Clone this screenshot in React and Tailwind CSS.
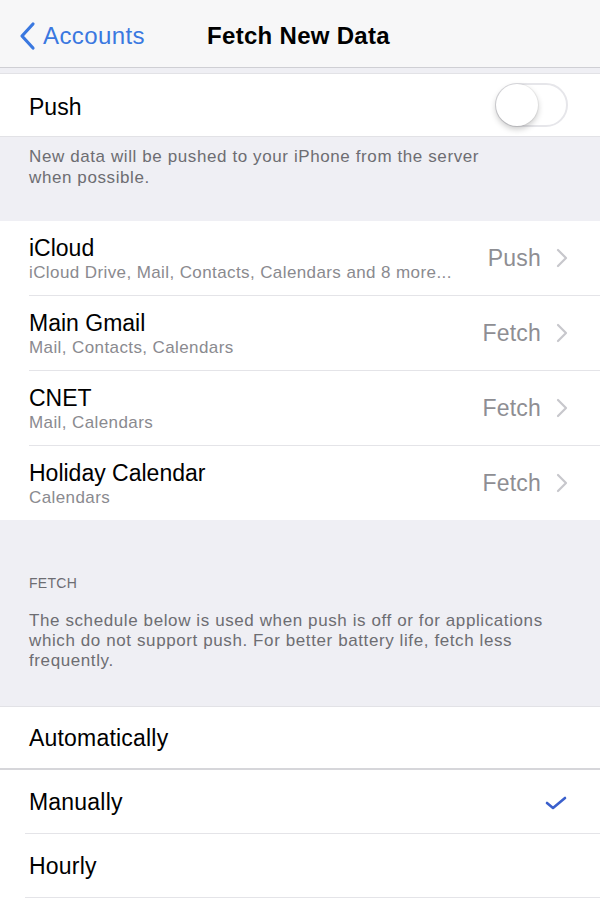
import React from "react";

const accounts = [
  { name: "iCloud", detail: "iCloud Drive, Mail, Contacts, Calendars and 8 more...", mode: "Push" },
  { name: "Main Gmail", detail: "Mail, Contacts, Calendars", mode: "Fetch" },
  { name: "CNET", detail: "Mail, Calendars", mode: "Fetch" },
  { name: "Holiday Calendar", detail: "Calendars", mode: "Fetch" },
];

function Chevron() {
  return (
    <svg width="12" height="20" viewBox="0 0 12 20" fill="none">
      <path d="M2 2l8 8-8 8" stroke="#c7c7cc" strokeWidth="2.2" strokeLinecap="round" strokeLinejoin="round" />
    </svg>
  );
}

function Toggle() {
  return (
    <div className="relative w-[73px] h-[44px] rounded-full border-2 border-[#e6e6ea] bg-white">
      <div className="absolute left-[-1px] top-[-1px] w-[42px] h-[42px] rounded-full bg-white shadow-[0_3px_6px_rgba(0,0,0,0.22),0_0_0_1px_rgba(0,0,0,0.05)]" />
    </div>
  );
}

export default function App() {
  return (
    <div className="w-[600px] h-[900px] overflow-hidden bg-[#efeff4] font-['Liberation_Sans',Arial,sans-serif] text-black">
      {/* navigation bar */}
      <div className="relative h-[68px] bg-[#f7f7f8] border-b border-[#cfcfd4] flex items-center">
        <div className="flex items-center pl-[18px] pt-[5px] gap-[7px] text-[#3a78e0]">
          <svg width="18" height="30" viewBox="0 0 18 30" fill="none">
            <path d="M15 3L4 15l11 12" stroke="#3a78e0" strokeWidth="3.2" strokeLinecap="round" strokeLinejoin="round" />
          </svg>
          <span className="text-[24px] tracking-[0.4px]">Accounts</span>
        </div>
        <div className="absolute inset-x-0 top-0 h-full flex items-center justify-center pt-[5px] pointer-events-none">
          <span className="text-[24px] font-bold tracking-[0.3px] ml-[-3px]">Fetch New Data</span>
        </div>
      </div>

      {/* push switch */}
      <div className="mt-[5px] h-[64px] bg-white border-y border-[#e2e2e6] flex items-center justify-between pl-[29px] pr-[32px]">
        <span className="text-[23px] pt-[5px]">Push</span>
        <Toggle />
      </div>
      <div className="h-[84px] pl-[29px] pr-[20px] pt-[9px] text-[17px] tracking-[0.6px] leading-[21px] text-[#6d6d72]">
        New data will be pushed to your iPhone from the server
        <br />
        when possible.
      </div>

      {/* accounts list */}
      <div className="bg-white">
        {accounts.map((a, i) => (
          <div key={a.name} className="pl-[29px]">
            <div
              className={
                "flex items-center justify-between pr-[32px] " +
                (i < accounts.length - 1 ? "h-[75px] border-b border-[#e4e4e8]" : "h-[74px]")
              }
            >
              <div className="flex flex-col pt-[2px]">
                <span className="text-[23px] leading-[26px]">{a.name}</span>
                <span className="text-[17px] tracking-[0.4px] leading-[22px] text-[#8a8a8f] mt-[1px]">{a.detail}</span>
              </div>
              <div className="flex items-center gap-[15px]">
                <span className="text-[23px] tracking-[0.2px] text-[#8e8e93]">{a.mode}</span>
                <Chevron />
              </div>
            </div>
          </div>
        ))}
      </div>

      {/* fetch schedule */}
      <div className="h-[186px] pl-[29px] pr-[20px] pt-[53px]">
        <div className="text-[14px] tracking-[0.3px] leading-[20px] text-[#6d6d72]">FETCH</div>
        <div className="mt-[18px] text-[17px] tracking-[0.6px] leading-[20px] text-[#6d6d72]">
          The schedule below is used when push is off or for applications
          <br />
          which do not support push. For better battery life, fetch less
          <br />
          frequently.
        </div>
      </div>

      <div className="bg-white border-t border-[#e2e2e6]">
        <div className="h-[63px] flex items-center pl-[29px] pt-[2px] border-b-2 border-[#d6d6da]">
          <span className="text-[23px] tracking-[0.2px]">Automatically</span>
        </div>
        <div className="pl-[25px]">
          <div className="h-[64px] flex items-center justify-between pl-[4px] pr-[33px] pt-[2px] border-b border-[#e4e4e8]">
            <span className="text-[23px] tracking-[0.2px]">Manually</span>
            <svg width="22" height="14" viewBox="0 0 22 14" fill="none">
              <path d="M2 7l6 5L20 2" stroke="#3a5fcc" strokeWidth="2.6" strokeLinecap="round" strokeLinejoin="round" />
            </svg>
          </div>
          <div className="h-[64px] flex items-center pl-[4px] pt-[2px] border-b border-[#e4e4e8]">
            <span className="text-[23px] tracking-[0.2px]">Hourly</span>
          </div>
        </div>
        <div className="h-[10px]" />
      </div>
    </div>
  );
}
